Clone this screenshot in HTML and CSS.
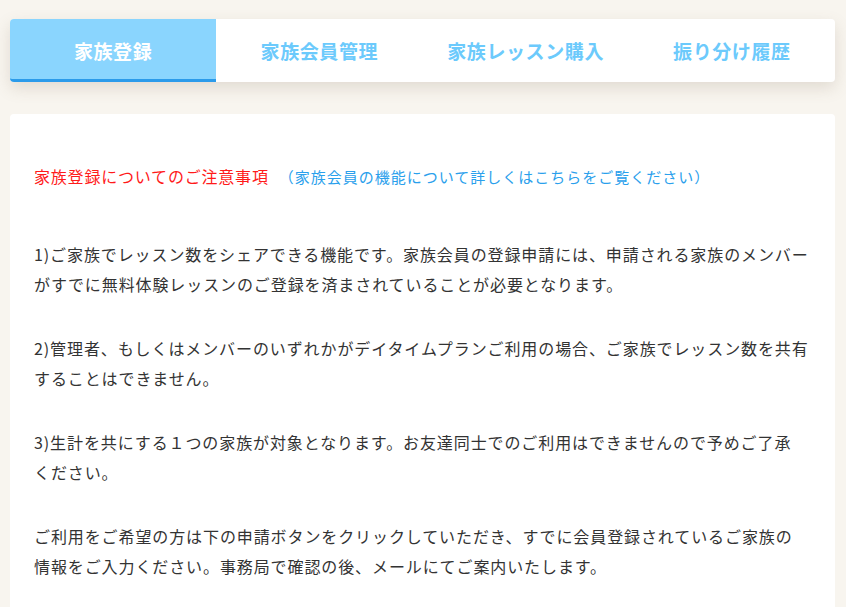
FILE: index.html
```html
<!DOCTYPE html>
<html lang="ja">
<head>
<meta charset="utf-8">
<link rel="stylesheet" href="styles.css">
</head>
<body>
<div class="page">
  <nav class="tabs">
    <div class="tab active">家族登録</div>
    <div class="tab">家族会員管理</div>
    <div class="tab">家族レッスン購入</div>
    <div class="tab">振り分け履歴</div>
  </nav>
  <section class="card">
    <p class="notice"><span class="notice-title">家族登録についてのご注意事項</span><a class="notice-link">（家族会員の機能について詳しくはこちらをご覧ください）</a></p>
    <p class="para">1)ご家族でレッスン数をシェアできる機能です。家族会員の登録申請には、申請される家族のメンバーがすでに無料体験レッスンのご登録を済まされていることが必要となります。</p>
    <p class="para">2)管理者、もしくはメンバーのいずれかがデイタイムプランご利用の場合、ご家族でレッスン数を共有することはできません。</p>
    <p class="para">3)生計を共にする１つの家族が対象となります。お友達同士でのご利用はできませんので予めご了承<br>ください。</p>
    <p class="para">ご利用をご希望の方は下の申請ボタンをクリックしていただき、すでに会員登録されているご家族の<br>情報をご入力ください。事務局で確認の後、メールにてご案内いたします。</p>
  </section>
</div>
</body>
</html>
```

FILE: styles.css
```css
html, body {
  margin: 0;
  padding: 0;
  background: #f8f5ef;
  font-family: "Noto Sans CJK JP", "Noto Sans", sans-serif;
}
.page {
  padding: 19px 11px 0 10px;
}
.tabs {
  display: grid;
  grid-template-columns: repeat(4, 1fr);
  height: 63px;
  background: #ffffff;
  border-radius: 4px;
  box-shadow: 0 6px 16px rgba(120, 100, 80, 0.18);
}
.tab {
  display: flex;
  align-items: center;
  justify-content: center;
  font-size: 19px;
  font-weight: 700;
  color: #6ccafc;
  letter-spacing: 0.6px;
}
.tab.active {
  background: #8ad5fe;
  color: #ffffff;
  border-radius: 4px 0 0 4px;
  border-bottom: 3px solid #2b9bea;
  padding-top: 3px;
  box-sizing: border-box;
}
.card {
  margin-top: 32px;
  background: #ffffff;
  border-radius: 4px 4px 0 0;
  padding: 47px 25px 20px 24px;
  min-height: 460px;
}
.notice {
  margin: 0 0 47px;
  line-height: 30px;
  letter-spacing: 0.8px;
}
.notice-title {
  color: #ff1a1a;
  font-size: 16px;
}
.notice-link {
  margin-left: 10px;
  color: #2aa0ec;
  font-size: 15px;
  letter-spacing: 1px;
}
.para {
  margin: 0 0 34px;
  font-size: 16px;
  line-height: 30px;
  color: #333333;
  letter-spacing: 0.9px;
}
```
